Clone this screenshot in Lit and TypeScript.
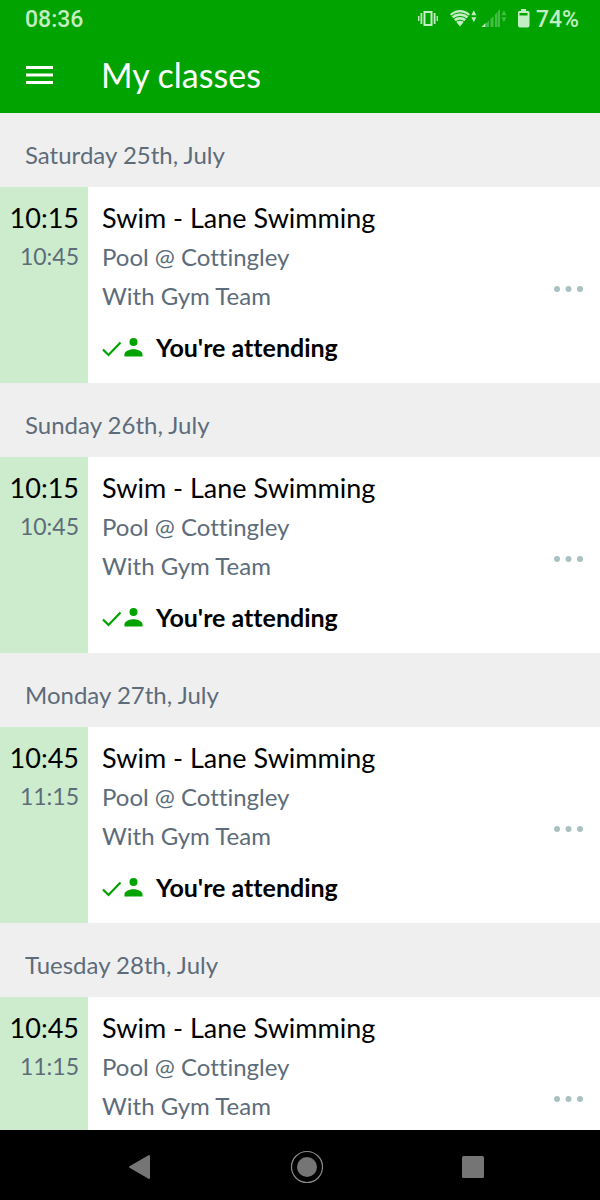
import { LitElement, html, css, nothing } from "lit";
import { customElement, property } from "lit/decorators.js";

interface GymClass {
  day: string;
  start: string;
  end: string;
  title: string;
  place: string;
  host: string;
  attending: boolean;
}

const lane = {
  title: "Swim - Lane Swimming",
  place: "Pool @ Cottingley",
  host: "With Gym Team",
};

const classes: GymClass[] = [
  { day: "Saturday 25th, July", start: "10:15", end: "10:45", attending: true, ...lane },
  { day: "Sunday 26th, July", start: "10:15", end: "10:45", attending: true, ...lane },
  { day: "Monday 27th, July", start: "10:45", end: "11:15", attending: true, ...lane },
  { day: "Tuesday 28th, July", start: "10:45", end: "11:15", attending: false, ...lane },
];

@customElement("status-bar")
class StatusBar extends LitElement {
  static styles = css`
    :host {
      display: flex;
      align-items: center;
      justify-content: space-between;
      height: 39px;
      padding: 0 21px 0 25px;
      color: #c3edc3;
      font: 500 23px/39px Roboto, sans-serif;
    }
    .signals {
      display: flex;
      align-items: center;
    }
    .glyphs {
      display: block;
      fill: currentColor;
    }
    .faint {
      opacity: 0.35;
    }
    .level {
      padding-left: 3px;
    }
    .line {
      fill: none;
      stroke: currentColor;
      stroke-width: 2;
    }
    .arc {
      fill: none;
      stroke: #00a300;
      stroke-width: 1;
    }
  `;

  render() {
    return html`
      <span>08:36</span>
      <div class="signals">
        <svg class="glyphs" width="116" height="39" viewBox="417 0 116 39" aria-hidden="true">
          <rect class="line" x="424.5" y="12" width="7" height="13" />
          <path d="M420.5 13h1.8v11h-1.8zM418 16h1.4v5H418zM433.7 13h1.8v11h-1.8zM436.600 16h1.4v5h-1.4z" />
          <path d="M450 14.200Q460 6 470 14.200L460 26.500Z" />
          <path class="arc" d="M450.500 16.500Q460 9 469.500 16.500M452.500 19.500Q460 13.300 467.500 19.500M455 22.300Q460 18 465 22.300" />
          <path d="M471.300 15.200l2.500-5 2.500 5zM471.300 17.300h5l-2.500 5z" />
          <path class="faint" d="M486 23.500l3-3V27h-3zM490.500 19l3-3v11h-3zM495 14.500l2-2V27h-2zM497.500 12l2.500-3v18h-2.500zM501.400 15.200l2.500-5 2.500 5zM501.400 17.300h5l-2.500 5z" />
          <path d="M481.500 27l4-4v4z" />
          <path
            fill-rule="evenodd"
            d="M521 9h5v2h2q1.500 0 1.500 1.500v13q0 2-2 2h-7.500q-2 0-2-2v-13q0-1.500 1.500-1.500H521zM519.500 13v2.500h8V13z"
          />
        </svg>
        <span class="level">74%</span>
      </div>
    `;
  }
}

@customElement("class-row")
class ClassRow extends LitElement {
  @property({ attribute: false }) item!: GymClass;

  static styles = css`
    :host {
      display: block;
    }
    .day {
      margin: 0;
      padding: 22px 25px 12px;
      background: #efefef;
      color: #5d6c7a;
      font-size: 24px;
      font-weight: 400;
      line-height: 40px;
    }
    .row {
      display: flex;
      box-sizing: border-box;
      min-height: 196px;
      background: #fff;
      line-height: 39px;
      font-size: 24px;
      color: #5d6c7a;
    }
    .times {
      box-sizing: border-box;
      flex: 0 0 88px;
      padding: 11px 9px 16px 0;
      background: #cdeccd;
      font-size: 23px;
      text-align: right;
    }
    .times time {
      display: block;
    }
    .details {
      flex: 1;
      min-width: 0;
      padding: 11px 0 16px 14px;
    }
    .title,
    .text {
      margin: 0;
      font-size: 24px;
      font-weight: 400;
    }
    .title,
    .times .start {
      color: #000;
      font-size: 27px;
    }
    .state {
      display: flex;
      align-items: center;
      gap: 12px;
      margin: 13px 0 0;
      color: #000;
      font-size: 25px;
      font-weight: 700;
    }
    .going {
      display: block;
      fill: #00a300;
    }
    .check {
      fill: none;
      stroke: #00a300;
      stroke-width: 2.2;
    }
    .more {
      flex: none;
      padding: 8px 16px 0;
      border: 0;
      background: none;
      cursor: pointer;
    }
    .dots {
      display: block;
      fill: #a9c2c1;
    }
  `;

  render() {
    const c = this.item;
    return html`
      <h2 class="day">${c.day}</h2>
      <div class="row">
        <div class="times">
          <time class="start">${c.start}</time>
          <time>${c.end}</time>
        </div>
        <div class="details">
          <h3 class="title">${c.title}</h3>
          <p class="text">${c.place}</p>
          <p class="text">${c.host}</p>
          ${c.attending
            ? html`<p class="state">
                <svg class="going" width="42" height="24" viewBox="0 0 42 24" aria-hidden="true">
                  <path class="check" d="M1 13.500l5.500 5.500L18.500 6.500" />
                  <circle cx="31.500" cy="6" r="4" />
                  <path d="M22.500 20.500v-2.300c0-3.300 5.500-5 9-5s9 1.700 9 5v2.300z" />
                </svg>
                <span>You're attending</span>
              </p>`
            : nothing}
        </div>
        <button class="more" type="button" aria-label="More options">
          <svg class="dots" width="32" height="8" viewBox="0 0 32 8" aria-hidden="true">
            <circle cx="5" cy="4" r="3" />
            <circle cx="16.500" cy="4" r="3" />
            <circle cx="28" cy="4" r="3" />
          </svg>
        </button>
      </div>
    `;
  }
}

@customElement("app-root")
class AppRoot extends LitElement {
  static styles = css`
    :host {
      display: flex;
      flex-direction: column;
      height: 100vh;
      background: #fff;
      font-family: Lato, sans-serif;
      font-variant-ligatures: none;
    }
    .top {
      flex: none;
      background: #00a300;
      color: #fff;
    }
    .bar {
      box-sizing: border-box;
      display: flex;
      align-items: center;
      height: 74px;
      gap: 36px;
      padding: 0 13px 2px;
    }
    .menu {
      padding: 12px;
      border: 0;
      background: none;
      cursor: pointer;
    }
    .lines {
      display: block;
      fill: #fff;
    }
    .heading {
      margin: 0;
      font-size: 34px;
      font-weight: 400;
      line-height: 48px;
    }
    .list {
      flex: 1;
      min-height: 0;
      overflow-y: auto;
      scrollbar-width: none;
    }
    .keys {
      flex: none;
      display: grid;
      grid-template-columns: repeat(3, 1fr);
      justify-items: center;
      align-items: center;
      height: 66px;
      padding: 4px 43px 0 57px;
      background: #000;
    }
    .key {
      padding: 8px;
      border: 0;
      background: none;
      cursor: pointer;
    }
    .shape {
      display: block;
      fill: #757575;
    }
    .soft {
      stroke: #757575;
      stroke-width: 2;
      stroke-linejoin: round;
    }
    .ring {
      fill: none;
      stroke: #8a8a8a;
      stroke-width: 1.2;
    }
  `;

  render() {
    return html`
      <header class="top">
        <status-bar></status-bar>
        <div class="bar">
          <button class="menu" type="button" aria-label="Menu">
            <svg class="lines" width="28" height="20" viewBox="0 0 28 20" aria-hidden="true">
              <path d="M1 1h27v3H1zM1 8.500h27v3H1zM1 16h27v3H1z" />
            </svg>
          </button>
          <h1 class="heading">My classes</h1>
        </div>
      </header>
      <main class="list">
        ${classes.map((c) => html`<class-row .item=${c}></class-row>`)}
      </main>
      <nav class="keys" aria-label="System">
        <button class="key" type="button" aria-label="Back">
          <svg class="shape" width="34" height="34" viewBox="0 0 34 34" aria-hidden="true">
            <path class="soft" d="M7 17L26 6v22z" />
          </svg>
        </button>
        <button class="key" type="button" aria-label="Home">
          <svg class="shape" width="34" height="34" viewBox="0 0 34 34" aria-hidden="true">
            <circle cx="17" cy="17" r="10" />
            <circle class="ring" cx="17" cy="17" r="15.500" />
          </svg>
        </button>
        <button class="key" type="button" aria-label="Recent apps">
          <svg class="shape" width="34" height="34" viewBox="0 0 34 34" aria-hidden="true">
            <rect x="5" y="6" width="22" height="22" rx="1.500" />
          </svg>
        </button>
      </nav>
    `;
  }
}
